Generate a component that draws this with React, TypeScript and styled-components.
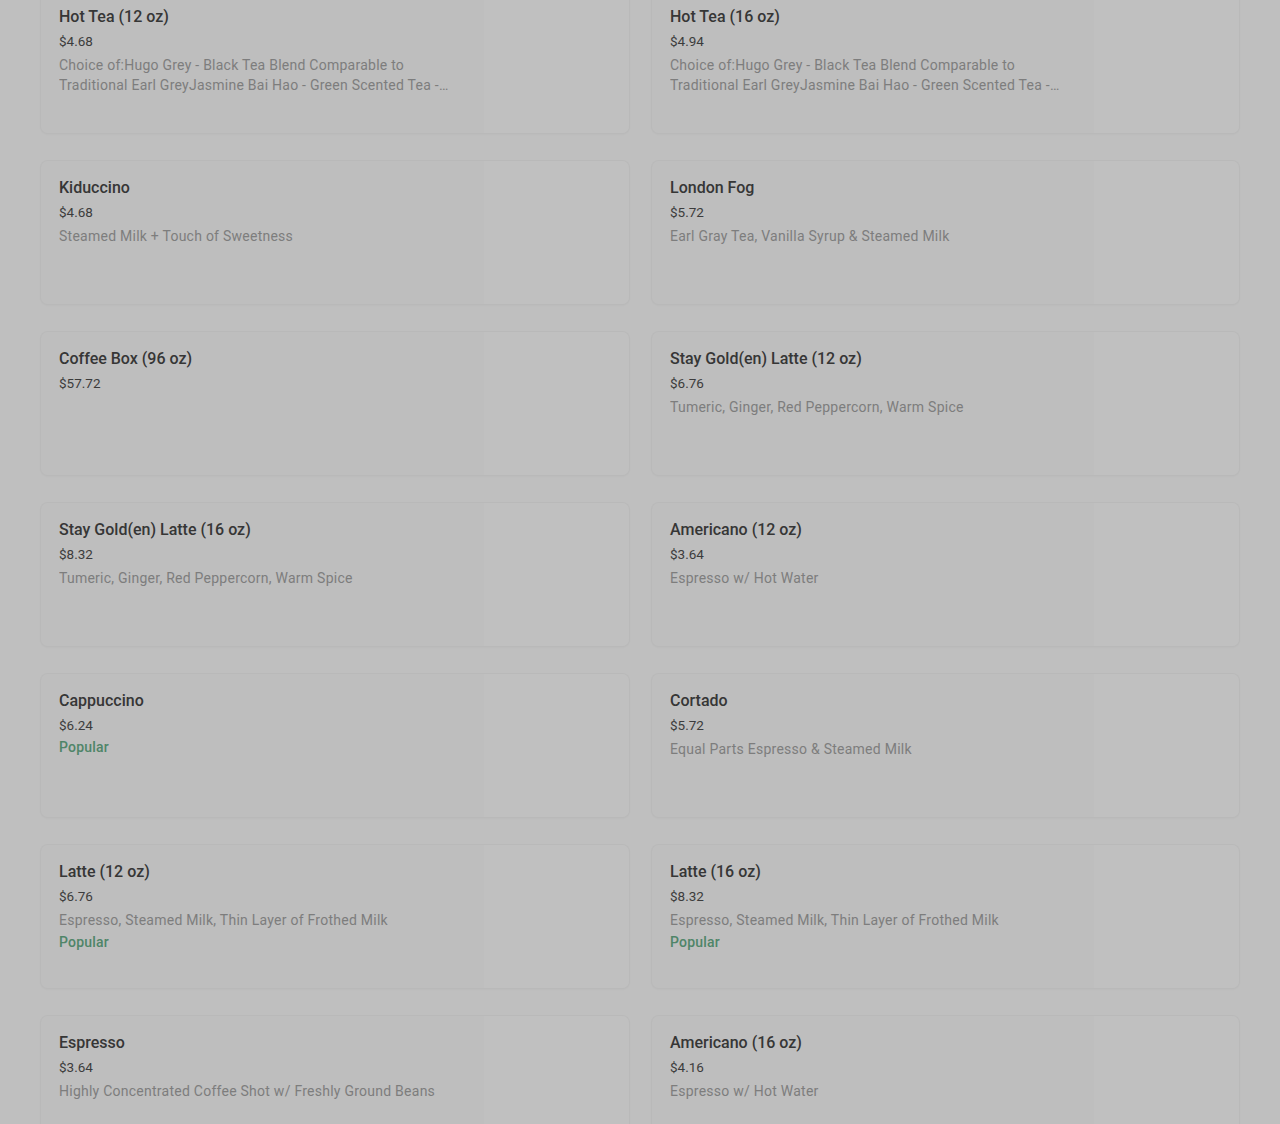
import React from 'react';
import styled, { createGlobalStyle } from 'styled-components';

const GlobalStyle = createGlobalStyle`
  html, body {
    margin: 0;
    padding: 0;
    background: #bfbfbf;
    font-family: Roboto, 'Liberation Sans', sans-serif;
    overflow: hidden;
  }
`;

const Page = styled.div`
  width: 1280px;
  height: 1124px;
  overflow: hidden;
  background: #bfbfbf;
`;

const Grid = styled.div`
  display: grid;
  grid-template-columns: 590px 589px;
  column-gap: 21px;
  row-gap: 26px;
  padding: 0 40px;
  margin-top: -11px;
`;

const Card = styled.div`
  display: flex;
  height: 145px;
  box-sizing: border-box;
  border: 1px solid rgba(0, 0, 0, 0.022);
  border-radius: 8px;
  background: #bebebe;
  box-shadow: 0 1px 2px rgba(0, 0, 0, 0.02);
  overflow: hidden;
`;

const Info = styled.div`
  flex: 1;
  min-width: 0;
  padding: 16px 18px 0 18px;
`;

const Title = styled.div`
  font-size: 16px;
  line-height: 22px;
  font-weight: 500;
  color: #363636;
`;

const Price = styled.div`
  margin-top: 3px;
  font-size: 13.5px;
  line-height: 20px;
  color: #3c3c3c;
`;

const Desc = styled.div`
  margin-top: 4px;
  max-width: 410px;
  font-size: 14px;
  line-height: 20px;
  letter-spacing: 0.25px;
  color: #7d7d7d;
  display: -webkit-box;
  -webkit-line-clamp: 2;
  -webkit-box-orient: vertical;
  overflow: hidden;
`;

const Badge = styled.div`
  margin-top: 2px;
  font-size: 14px;
  line-height: 20px;
  font-weight: 500;
  letter-spacing: 0.2px;
  color: #4f8568;
`;

const Thumb = styled.div`
  width: 145px;
  height: 145px;
  flex-shrink: 0;
  background: #c0c0c0;
`;

interface Item {
  name: string;
  price: string;
  desc?: string;
  popular?: boolean;
}

const teaDesc =
  'Choice of:Hugo Grey - Black Tea Blend Comparable to Traditional Earl GreyJasmine Bai Hao - Green Scented Tea - Floral and Light';
const goldDesc = 'Tumeric, Ginger, Red Peppercorn, Warm Spice';
const latteDesc = 'Espresso, Steamed Milk, Thin Layer of Frothed Milk';

const items: Item[] = [
  { name: 'Hot Tea (12 oz)', price: '$4.68', desc: teaDesc },
  { name: 'Hot Tea (16 oz)', price: '$4.94', desc: teaDesc },
  { name: 'Kiduccino', price: '$4.68', desc: 'Steamed Milk + Touch of Sweetness' },
  { name: 'London Fog', price: '$5.72', desc: 'Earl Gray Tea, Vanilla Syrup & Steamed Milk' },
  { name: 'Coffee Box (96 oz)', price: '$57.72' },
  { name: 'Stay Gold(en) Latte (12 oz)', price: '$6.76', desc: goldDesc },
  { name: 'Stay Gold(en) Latte (16 oz)', price: '$8.32', desc: goldDesc },
  { name: 'Americano (12 oz)', price: '$3.64', desc: 'Espresso w/ Hot Water' },
  { name: 'Cappuccino', price: '$6.24', popular: true },
  { name: 'Cortado', price: '$5.72', desc: 'Equal Parts Espresso & Steamed Milk' },
  { name: 'Latte (12 oz)', price: '$6.76', desc: latteDesc, popular: true },
  { name: 'Latte (16 oz)', price: '$8.32', desc: latteDesc, popular: true },
  { name: 'Espresso', price: '$3.64', desc: 'Highly Concentrated Coffee Shot w/ Freshly Ground Beans' },
  { name: 'Americano (16 oz)', price: '$4.16', desc: 'Espresso w/ Hot Water' },
];

const MenuCard: React.FC<{ item: Item }> = ({ item }) => (
  <Card>
    <Info>
      <Title>{item.name}</Title>
      <Price>{item.price}</Price>
      {item.desc && <Desc>{item.desc}</Desc>}
      {item.popular && <Badge>Popular</Badge>}
    </Info>
    <Thumb />
  </Card>
);

const App: React.FC = () => (
  <Page>
    <GlobalStyle />
    <Grid>
      {items.map((item) => (
        <MenuCard key={item.name} item={item} />
      ))}
    </Grid>
  </Page>
);

export default App;
